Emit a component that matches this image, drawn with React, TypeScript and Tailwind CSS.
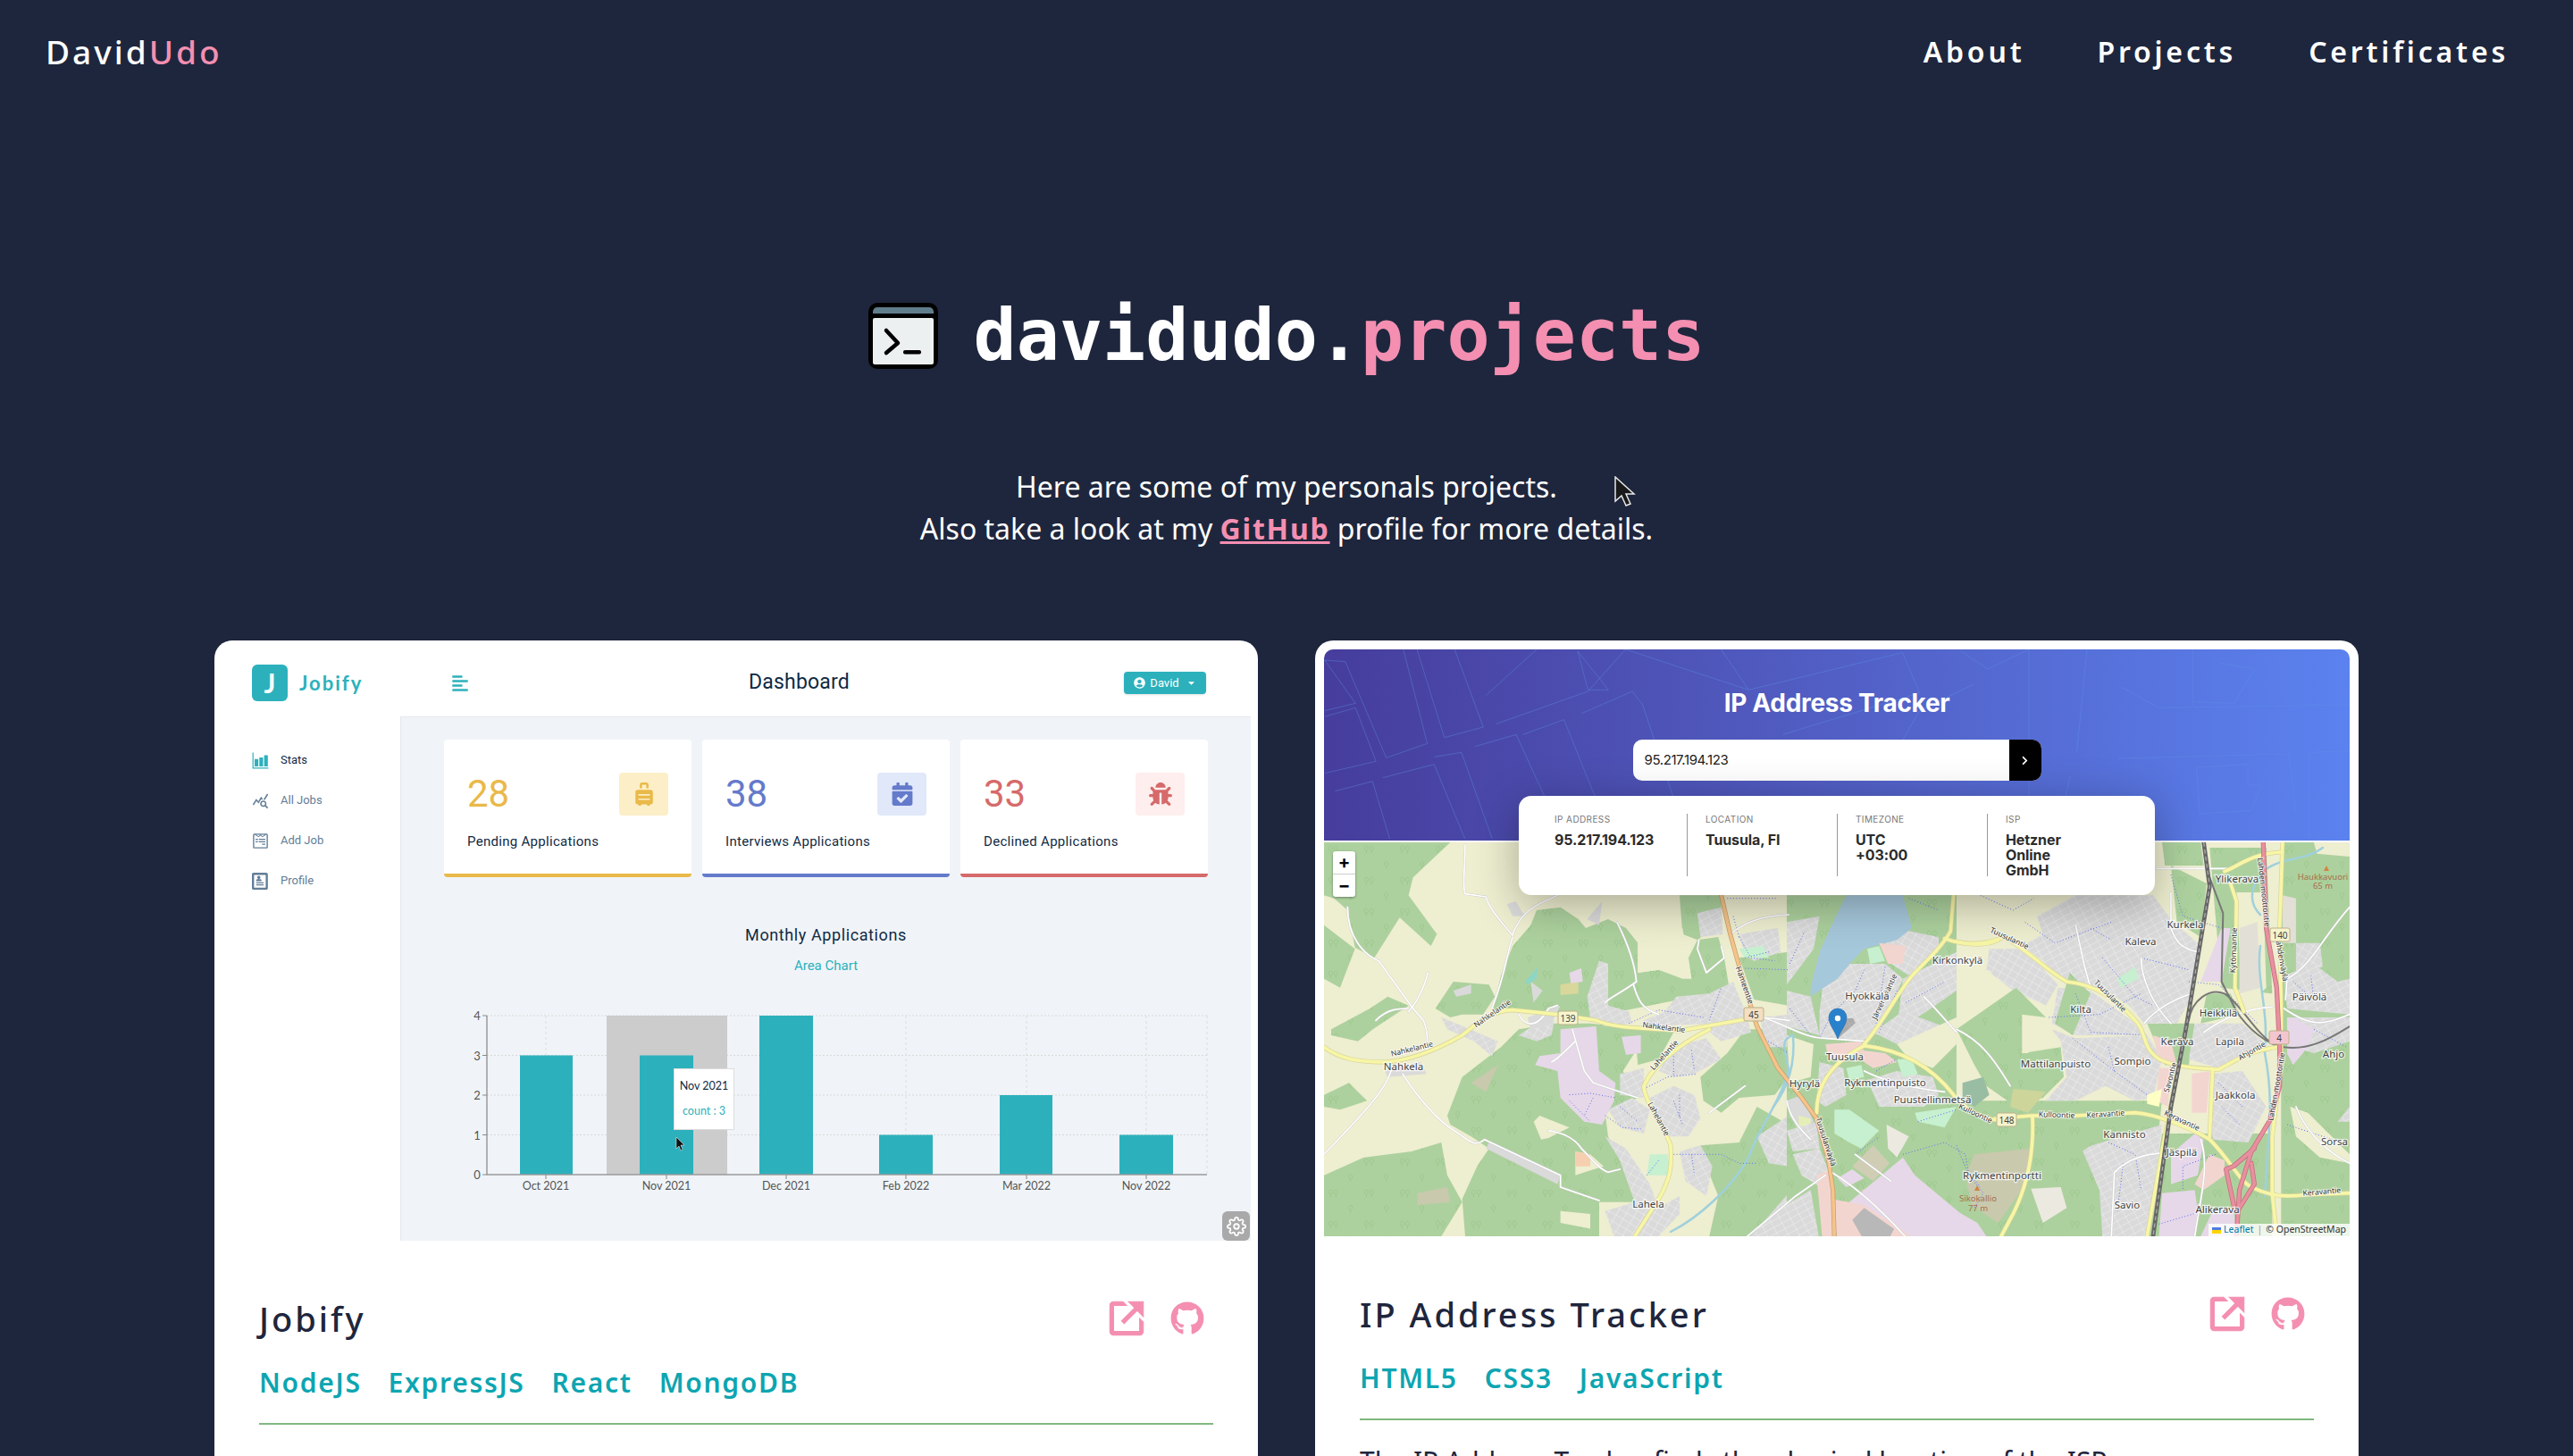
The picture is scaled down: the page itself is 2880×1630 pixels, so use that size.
import { BiLinkExternal } from 'react-icons/bi'
import { FaAlignLeft, FaBug, FaCalendarCheck, FaCaretDown, FaChevronRight, FaGithub, FaSuitcaseRolling, FaUserCircle, FaWpforms } from 'react-icons/fa'
import { ImProfile } from 'react-icons/im'
import { IoBarChartSharp } from 'react-icons/io5'
import { MdQueryStats } from 'react-icons/md'
import { FiSettings } from 'react-icons/fi'

type Area = [string, string]

const FOREST = 'url(#forest)'
const BLOCKS = 'url(#blocks)'
const BLOCKS2 = 'url(#blocks2)'
const PINK = '#e6d8e8'
const SALMON = '#f3d5d0'
const MINT = '#c6f0cf'
const OLIVE = '#c9c9ae'
const CREAM = '#eeeed0'

// polygons are written in the zoomed-in crop units (3 units = 1px)
const areasA: Area[] = [
  [FOREST, '6,12 430,12 305,130 290,190 385,320 365,360 260,265 175,400 110,365 85,240 40,200 6,190'],
  [FOREST, '6,290 110,370 60,500 6,470'],
  [FOREST, '30,640 160,570 220,530 290,560 170,640 120,680 30,660'],
  [FOREST, '380,570 440,480 560,490 580,530 540,590 470,590 430,600'],
  [FOREST, '640,360 700,290 720,240 800,230 860,270 885,300 960,270 1020,300 1060,350 1060,450 1130,440 1210,470 1240,470 1230,400 1260,340 1330,330 1350,400 1370,520 1300,560 1200,540 900,600 640,580 570,590 600,460'],
  [FOREST, '420,930 470,800 600,700 660,640 780,620 900,620 1100,640 1010,780 1060,870 950,920 960,1000 1000,1080 1050,1220 930,1220 930,1335 480,1335 470,1210 520,1100 560,1040 500,1000 430,960'],
  [FOREST, '6,1130 140,1070 300,1050 400,1020 420,1130 470,1220 400,1335 6,1335'],
  [FOREST, '1270,800 1360,720 1420,640 1566,640 1566,800 1520,860 1400,870 1340,920 1280,880'],
  [FOREST, '1200,190 1340,190 1340,280 1260,340 1210,320'],
  [FOREST, '1270,1030 1400,1020 1460,900 1566,960 1566,1335 1300,1335 1330,1200 1290,1100'],
  [FOREST, '1400,400 1566,380 1566,560 1450,540'],
  [FOREST, '1050,640 1180,650 1130,740 1060,760'],
  [FOREST, '6,860 90,820 150,880 60,910 6,900'],
  [CREAM, '710,950 730,930 830,970 760,1005 735,1010'],
  [CREAM, '850,1050 900,1060 945,1100 850,1130'],
  [CREAM, '800,1250 900,1260 900,1310 800,1290'],
  [CREAM, '1060,350 1210,300 1240,470 1130,440 1060,450'],
  [OLIVE, '500,820 590,760 550,850'],
  [OLIVE, '320,1190 420,1170 430,1220 320,1230'],
  ['#d9d79b', '800,490 860,480 860,520 800,525'],
  ['#f6cfb0', '850,1050 900,1060 900,1100 850,1100'],
  [PINK, '800,640 920,630 930,780 985,820 980,880 940,960 880,950 800,870 790,780 715,760 730,730 800,720'],
  [PINK, '1005,665 1070,660 1070,720 1020,725'],
  [PINK, '830,450 870,435 875,480 835,485'],
  [BLOCKS, '890,530 930,410 960,420 960,560 1030,580 1040,620 950,630 900,600'],
  [BLOCKS, '1080,610 1150,580 1190,530 1300,520 1320,620 1090,630'],
  [BLOCKS2, '1300,520 1380,480 1420,580 1440,650 1340,680 1290,640'],
  [BLOCKS2, '1180,700 1290,670 1340,740 1250,790 1180,800 1130,780'],
  [BLOCKS, '1000,790 1080,770 1080,870 1000,860'],
  [BLOCKS, '960,910 1040,870 1100,910 1080,990 1000,970'],
  [BLOCKS2, '1100,870 1180,830 1250,860 1270,940 1230,1000 1160,1000 1110,920'],
  [BLOCKS, '1200,1050 1270,1030 1310,1100 1290,1200 1220,1150'],
  [BLOCKS2, '950,1000 1020,1040 1100,1160 1130,1240 1200,1200 1200,1260 1130,1335 980,1335 950,1250 1050,1220 1000,1080'],
  [BLOCKS, '1440,1335 1566,1190 1566,1335'],
  [BLOCKS2, '1460,1000 1566,930 1566,1100 1500,1090'],
  [BLOCKS, '1400,320 1530,300 1540,380 1450,410 1420,390'],
  [BLOCKS, '1470,600 1566,590 1566,700 1490,700'],
  [BLOCKS, '400,600 450,620 590,680 570,730 510,680 420,640'],
  [BLOCKS2, '660,660 720,620 780,610 770,660 720,680'],
  [BLOCKS, '1260,250 1340,230 1345,320 1270,330'],
  ['#dadada', '210,780 330,750 350,790 220,800'],
  ['#dadada', '620,220 650,210 680,260 640,260'],
  ['#dadada', '440,510 500,490 500,520 450,530'],
  ['#dadada', '700,480 740,510 710,550'],
  ['#dadada', '690,600 800,560 770,620 700,640'],
  ['#dadada', '560,1020 800,1130 790,1160 550,1040'],
  ['#dadada', '890,270 940,210 930,290'],
  [MINT, '1100,1060 1160,1060 1170,1130 1090,1130'],
  [MINT, '1400,370 1480,360 1500,400 1420,400'],
  ['#8fd5c4', '680,480 725,430 720,470 690,490'],
]

const areasB: Area[] = [
  [FOREST, '390,10 960,10 960,1170 390,1170'],
  [CREAM, '390,480 480,510 470,620 400,640'],
  ['#dadada', '390,700 440,680 480,770 430,800 400,750'],
  [BLOCKS, '520,240 720,240 780,290 700,470 640,500 500,490 500,400'],
  [BLOCKS2, '710,130 800,130 900,150 900,200 800,280 740,240'],
  [BLOCKS, '390,100 500,80 480,190 390,310'],
  [BLOCKS, '780,290 960,200 960,330 860,400 760,460'],
  [BLOCKS2, '680,470 780,400 890,440 960,470 760,510'],
  [BLOCKS, '390,330 470,350 500,480 390,450'],
  [CREAM, '760,510 960,420 960,510 880,590 800,560'],
  [FOREST, '790,10 960,10 960,120 890,150 840,100'],
  ['#a6c8db', '590,10 780,10 810,120 760,160 650,190 610,230 560,290 470,350 470,320 500,200 550,90'],
  [SALMON, '700,170 790,180 780,240 730,240'],
  [SALMON, '520,510 640,500 650,540 530,560'],
  [SALMON, '640,530 720,540 760,570 680,590 650,570'],
  [MINT, '660,190 700,180 720,230 670,240'],
  [BLOCKS, '500,570 580,590 590,680 520,720 490,700'],
  [BLOCKS, '660,630 760,600 880,620 900,680 850,720 700,720'],
  [MINT, '590,590 640,580 650,620 600,630'],
  [MINT, '760,560 810,560 830,610 780,620'],
  [MINT, '550,730 600,730 700,800 640,860 600,840 550,810'],
  [MINT, '820,740 960,720 920,790 830,770'],
  ['#e6eeb8', '430,750 470,760 470,790 430,790'],
  [BLOCKS2, '410,880 500,860 540,960 520,1000 440,950'],
  [BLOCKS, '390,800 490,770 500,860 410,870'],
  ['#cfceb4', '610,920 680,850 735,910 680,970'],
  ['#cfceb4', '640,1000 730,970 740,1000 680,1050'],
  [PINK, '600,1040 780,890 820,950 1000,1100 1040,1170 830,1170'],
  [PINK, '560,960 610,930 650,960 590,990'],
  [SALMON, '490,950 540,930 550,1170 510,1170'],
  [SALMON, '540,1030 650,1050 830,1170 560,1170'],
  ['#b8b8b8', '610,1100 650,1060 750,1130 730,1170 650,1170'],
  [BLOCKS, '250,1170 370,1060 470,1000 500,1170'],
  ['#ece9e0', '725,780 800,820 760,890 730,860'],
]

const areasC: Area[] = [
  [FOREST, '0,880 690,880 640,1335 0,1335'],
  [FOREST, '1090,12 1320,12 1320,1335 1090,1335'],
  [FOREST, '850,30 1040,30 1060,520 890,500'],
  [CREAM, '940,180 1030,180 1040,500 960,580'],
  [FOREST, '690,990 1060,990 1060,1335 640,1335'],
  [FOREST, '640,620 800,620 780,760 700,760'],
  [CREAM, '1120,900 1180,920 1320,1060 1320,1090 1220,1070 1140,1000'],
  [CREAM, '1200,12 1320,12 1320,60 1210,50'],
  [BLOCKS, '270,260 400,190 660,190 720,270 820,360 790,530 740,620 630,620 580,560 480,500 360,480 290,410 220,360 290,320'],
  [BLOCKS2, '110,370 230,370 340,490 300,560 190,510 100,440'],
  [BLOCKS2, '320,640 400,670 640,660 690,740 660,870 600,880 500,830 400,880 300,880 370,800 350,680'],
  [BLOCKS2, '340,500 450,510 600,620 640,660 400,660 320,620'],
  [BLOCKS, '800,620 960,620 1040,690 880,770 780,740'],
  [BLOCKS2, '850,790 960,780 1040,900 980,1020 860,1010'],
  [BLOCKS, '420,1040 520,1010 690,960 680,1050 640,1335 490,1335 480,1180'],
  [BLOCKS, '1130,600 1320,600 1320,680 1200,720 1130,700'],
  [BLOCKS2, '1140,350 1220,350 1230,430 1140,450'],
  [BLOCKS, '1100,460 1200,420 1280,480 1320,470 1320,590 1110,570'],
  [BLOCKS, '1320,950 1280,950 1320,900'],
  [CREAM, '0,480 110,440 190,560 60,660 0,640'],
  [FOREST, '0,640 200,500 300,600 240,600 220,720 350,700 360,800 290,870 200,900 100,830 60,760'],
  [FOREST, '0,980 130,960 260,950 400,950 500,1000 420,1050 480,1200 480,1335 150,1335 260,1050 130,1010 0,1030'],
  [FOREST, '720,90 840,150 820,330 740,280'],
  [FOREST, '380,450 450,520 390,660 330,620'],
  [FOREST, '690,12 820,12 830,90 700,90'],
  [FOREST, '840,520 920,520 950,590 820,620'],
  [CREAM, '220,590 300,600 240,720 220,720'],
  [PINK, '820,480 890,300 920,300 890,480'],
  [PINK, '1110,600 1130,600 1200,640 1180,700 1130,760 1110,720'],
  [PINK, '690,1190 800,1180 810,1250 800,1335 680,1335'],
  [PINK, '860,1250 930,1240 940,1335 820,1335'],
  [PINK, '720,1060 800,990 830,1010 810,1130 720,1160'],
  [PINK, '0,1250 70,1290 100,1335 0,1335'],
  [SALMON, '660,660 720,680 740,760 680,750'],
  [SALMON, '680,770 720,770 710,900 670,880'],
  [SALMON, '790,790 850,780 840,920 790,920'],
  [SALMON, '850,1060 900,1080 900,1130 830,1180 800,1160'],
  [OLIVE, '60,1060 250,1040 240,1150 140,1290 50,1230 30,1130'],
  ['#cdd59a', '190,840 300,850 240,920 180,900'],
  ['#99bda3', '20,820 90,800 110,860 60,900 20,870'],
  ['#ece9e0', '250,1175 350,1170 370,1240 290,1290'],
  ['#e2dfd6', '950,300 1010,280 1020,500 950,520'],
  ['#e2dfd6', '1095,190 1140,200 1140,350 1095,350'],
  [MINT, '540,470 600,430 610,470 550,500'],
  ['#feffc4', '640,860 690,840 680,900 640,890'],
]

const yellowRoads = {
  a: [
    'M6,700 C60,740 120,750 210,750 C300,745 400,700 470,660 C530,610 580,575 640,575 L790,590 L920,610 C990,640 1100,635 1200,645 L1430,605',
    'M1300,640 C1200,690 1110,760 1080,830 C1080,880 1160,990 1170,1030 C1175,1100 1170,1140 1130,1210 L1050,1335',
  ],
  b: [
    'M650,510 C720,430 770,320 820,270 C870,220 920,170 940,130 L950,10',
    'M920,155 C990,180 1060,180 1100,160',
    'M650,515 C780,530 880,590 950,680 C990,730 1040,760 1100,765',
    'M650,515 C560,560 490,630 490,740',
  ],
  c: [
    'M0,345 C60,360 110,350 160,330 C220,360 300,440 370,480 C470,490 540,540 600,610 C640,650 620,700 680,740 C740,770 820,770 880,775',
    'M130,940 L250,930 L400,930 L600,920 C680,925 800,980 850,1010 C920,1080 950,1150 990,1170 C1050,1200 1100,1205 1180,1195 L1320,1190',
    'M255,935 C260,1050 240,1160 190,1260 L150,1335',
    'M740,790 L690,1050 L640,1335',
    'M1095,12 L1085,300 L1090,560 L1090,760 L1060,1000 L1060,1190 L1075,1335',
    'M900,110 C950,90 990,50 1090,45',
    'M920,150 L940,210 L935,500 L965,580',
    'M880,775 C930,750 980,710 1080,700',
    'M860,780 L850,1000',
  ],
}

const whiteRoads = {
  a: [
    'M85,230 C85,330 140,390 190,410 C250,490 290,560 340,610 C360,660 350,690 350,720',
    'M355,450 C340,510 310,560 290,580 M180,610 C220,570 260,570 290,570',
    'M235,770 C210,850 140,920 6,1060',
    'M270,790 C320,870 390,950 450,985 C490,1010 510,1040 545,1010 L800,1130 L800,1170 L930,1215',
    'M640,330 C620,380 620,440 570,570 M640,320 C670,240 720,220 790,190',
    'M480,20 C480,100 470,160 480,185 L550,195 C560,240 620,300 640,325',
    'M840,640 L880,780 L910,820 L1060,870',
    'M850,680 C810,720 790,740 770,750',
    'M990,280 C1020,340 1050,420 1055,480 C1000,520 970,530 950,550 M1045,490 C1060,540 1070,570 1130,590',
    'M760,980 C820,990 850,1010 870,1040 C900,1070 930,1110 960,1120 L1000,1110',
    'M1370,320 C1420,280 1470,260 1566,255',
    'M1265,340 L1260,370 L1290,450 L1350,400 L1340,360',
    'M660,590 C680,630 720,640 760,570 L790,560',
    'M1570,610 L1480,600 M1300,920 L1420,830',
  ],
  b: [
    'M310,420 C400,450 450,490 520,490 L650,500',
    'M390,700 C400,760 440,800 470,830 M540,940 C640,1000 740,1100 800,1170',
    'M650,600 C730,640 830,660 920,670',
    'M240,1170 L420,1020 L520,950',
    'M620,880 L740,970',
    'M850,350 C900,400 940,450 960,470',
  ],
  c: [
    'M0,640 C80,680 120,730 180,830',
    'M670,100 L910,100',
    'M630,620 C680,560 760,530 790,520',
    'M400,290 L430,430 L450,500',
    'M620,400 C620,470 660,560 720,620',
    'M820,1010 C850,1100 820,1200 800,1335',
    'M1100,570 C1200,640 1240,620 1320,590',
    'M1320,230 C1230,330 1190,430 1110,470 L1105,540',
    'M830,650 C900,600 980,570 1060,565',
    'M520,1335 L530,1120 C580,1070 640,1060 690,1055',
    'M720,180 L720,300 C740,360 770,370 810,380',
    'M1140,900 C1180,1000 1260,1060 1320,1090',
  ],
}

const bluePaths = {
  a: [
    'M1420,400 L1500,380 M1400,330 L1440,400 L1520,410 M1420,435 L1566,440',
    'M830,860 L900,855 L985,870 M830,880 L900,950 M910,870 L880,930',
    'M950,930 L1010,970 L1070,975 M1000,900 L1060,950',
    'M1080,840 L1160,800 L1260,790 M1180,720 L1180,800 M1240,710 L1250,780',
    'M1030,620 L1130,575 L1280,600 M1300,610 L1340,500',
    'M1180,880 L1210,960 M1200,860 L1200,940',
    'M1170,1060 L1340,1060 L1400,1090 L1460,1090 M1090,1130 L1130,1080 M1240,1060 L1250,1130',
    'M1480,670 L1566,720 M1360,200 L1530,200 M1380,260 L1400,330',
  ],
  b: [
    'M780,880 L920,840 L990,880 L1000,940 L1040,990',
    'M720,250 L690,440 M760,330 L700,470 M540,410 L500,490',
    'M650,260 L620,330 L560,390',
    'M830,770 L960,730',
    'M620,880 L700,820',
    'M800,20 L900,60 M790,370 L920,300 M690,600 L760,560',
    'M400,240 L450,130 M400,390 L470,480',
  ],
  c: [
    'M80,190 L190,240 L260,200 M230,280 L330,350 L520,280',
    'M310,600 L480,590 L620,520 M400,520 L450,650 L640,660',
    'M490,400 L600,530 L660,560 M620,400 L780,440',
    'M390,670 L530,780 L640,860 M530,780 L510,700',
    'M510,1020 L600,1060 L620,1180 M560,1090 L540,1250',
    'M780,480 L880,490 L1010,620',
    'M720,120 L760,260 L890,300',
    'M1130,480 L1200,540 L1190,460 M1200,640 L1310,700 M1110,960 L1320,1030',
    'M0,1030 L40,1130 L90,1190 L60,1240',
    'M660,1300 L830,1250 M870,1060 L760,1100 L760,1180',
    'M450,300 L520,340 M880,820 L960,900 M890,900 L950,960',
  ],
}

const waterPaths = [
  'M2002,1200 C1990,1240 1965,1270 1958,1295 C1940,1330 1900,1365 1870,1380',
  'M2002,1200 C2000,1180 1990,1165 2007,1160 C2010,1195 2000,1220 1985,1240',
  'M2600,950 C2580,965 2555,960 2535,975 C2520,990 2515,1010 2530,1025 M2530,1060 C2525,1100 2540,1130 2535,1180 C2545,1230 2540,1260 2535,1340',
]

const labels: [string, number, number][] = [
  ['Nahkela', 1571, 1199],
  ['Lahela', 1845, 1353],
  ['Tuusula', 2065, 1188],
  ['Hyokkälä', 2090, 1120],
  ['Hyrylä', 2020, 1218],
  ['Rykmentinpuisto', 2110, 1217],
  ['Puustellinmetsä', 2163, 1236],
  ['Kirkonkylä', 2191, 1080],
  ['Rykmentinportti', 2241, 1321],
  ['Mattilanpuisto', 2301, 1196],
  ['Kilta', 2329, 1135],
  ['Sompio', 2387, 1193],
  ['Kannisto', 2378, 1275],
  ['Savio', 2381, 1354],
  ['Keräva', 2437, 1171],
  ['Lapila', 2496, 1171],
  ['Heikkilä', 2483, 1139],
  ['Kaleva', 2396, 1059],
  ['Kurkela', 2446, 1040],
  ['Ylikerava', 2504, 989],
  ['Päivölä', 2585, 1121],
  ['Ahjo', 2612, 1185],
  ['Jaakkola', 2502, 1231],
  ['Jäspilä', 2442, 1295],
  ['Alikerava', 2482, 1359],
  ['Sorsa', 2613, 1283],
]

const roadNames: [string, number, number, number][] = [
  ['Nahkelantie', 1581, 1178, -14],
  ['Nahkelantie', 1672, 1138, -35],
  ['Nahkelantie', 1862, 1154, 7],
  ['Lahelantie', 1865, 1184, -48],
  ['Lahelantie', 1854, 1255, 62],
  ['Hämeentie', 1950, 1105, 70],
  ['Tuusulanväylä', 2041, 1280, 72],
  ['Järvenpääntie', 2112, 1118, -65],
  ['Tuusulantie', 2248, 1054, 25],
  ['Tuusulantie', 2360, 1118, 45],
  ['Kulloontie', 2210, 1250, 25],
  ['Kulloontie', 2302, 1252, 2],
  ['Keravantie', 2357, 1251, -4],
  ['Keravantie', 2441, 1258, 25],
  ['Keravantie', 2599, 1338, -5],
  ['Savontie', 2432, 1208, -75],
  ['Ahjontie', 2522, 1180, -30],
  ['Kytömaantie', 2503, 1065, -88],
  ['Lahden moottoritie', 2531, 1000, 84],
  ['Lahden moottoritie', 2551, 1218, -80],
  ['Lahdenväylä', 2551, 1075, 80],
]

const shields: [string, number, number, string, string][] = [
  ['139', 1755, 1141, '#f7f4cc', '#444'],
  ['45', 1963, 1137, '#f4dfc0', '#444'],
  ['148', 2246, 1255, '#f7f4cc', '#444'],
  ['140', 2552, 1048, '#f7f4cc', '#444'],
  ['4', 2551, 1163, '#f3c6cf', '#444'],
]

function Polys({ areas }: { areas: Area[] }) {
  return (
    <>
      {areas.map(([fill, points], i) => (
        <polygon key={i} points={points} fill={fill} />
      ))}
    </>
  )
}

function Strokes({ paths, color, width, dash }: { paths: string[]; color: string; width: number; dash?: string }) {
  return (
    <>
      {paths.map((d, i) => (
        <path key={i} d={d} fill="none" stroke={color} strokeWidth={width} strokeDasharray={dash} strokeLinecap={dash ? 'butt' : 'round'} strokeLinejoin="round" />
      ))}
    </>
  )
}

function Cropped({ x, y, children }: { x: number; y: number; children: React.ReactNode }) {
  return <g transform={`translate(${x} ${y}) scale(0.3333)`}>{children}</g>
}

function RoadLayer({ road, casing, width }: { road: string[][]; casing: string; width: number }) {
  const origins = [[1480, 940], [1870, 1000], [2190, 940]]
  return (
    <>
      {road.map((paths, i) => (
        <Cropped key={i} x={origins[i][0]} y={origins[i][1]}>
          <Strokes paths={paths} color={casing} width={width} />
        </Cropped>
      ))}
    </>
  )
}

function MapDrawing() {
  const yellow = [yellowRoads.a, yellowRoads.b, yellowRoads.c]
  const white = [whiteRoads.a, whiteRoads.b, whiteRoads.c]
  return (
    <svg viewBox="1482 944 1148 441" className="block h-full w-full" preserveAspectRatio="none" fontFamily="'Noto Sans', sans-serif">
      <defs>
        <pattern id="forest" width="120" height="105" patternUnits="userSpaceOnUse">
          <rect width="120" height="105" fill="#add19e" />
          <path d="M28 40a6 8 0 1 1 .1 0zM28 40v10M46 40a6 8 0 1 1 .1 0zM46 40v10" fill="none" stroke="#94c285" strokeWidth="2" />
          <path d="M95 92a6 8 0 1 1 .1 0zM95 92v10" fill="none" stroke="#94c285" strokeWidth="2" />
        </pattern>
        <pattern id="blocks" width="32" height="21" patternUnits="userSpaceOnUse" patternTransform="rotate(-28)">
          <rect width="32" height="21" fill="#dadada" />
          <path d="M0 0H32M0 0V21" stroke="#f4f4f4" strokeWidth="2.5" />
        </pattern>
        <pattern id="blocks2" width="27" height="24" patternUnits="userSpaceOnUse" patternTransform="rotate(30)">
          <rect width="27" height="24" fill="#dadada" />
          <path d="M0 0H27M0 0V24" stroke="#f4f4f4" strokeWidth="2.5" />
        </pattern>
      </defs>
      <rect x="1482" y="944" width="1148" height="441" fill={CREAM} />
      <Cropped x={1480} y={940}>
        <Polys areas={areasA} />
      </Cropped>
      <Cropped x={2190} y={940}>
        <Polys areas={areasC} />
      </Cropped>
      <Cropped x={1870} y={1000}>
        <Polys areas={areasB} />
      </Cropped>

      <Strokes paths={waterPaths} color="#9fd0dd" width={2.5} />

      <Cropped x={1480} y={940}>
        <Strokes paths={bluePaths.a} color="#5c6cf0" width={3} dash="3 7" />
      </Cropped>
      <Cropped x={1870} y={1000}>
        <Strokes paths={bluePaths.b} color="#5c6cf0" width={3} dash="3 7" />
      </Cropped>
      <Cropped x={2190} y={940}>
        <Strokes paths={bluePaths.c} color="#5c6cf0" width={3} dash="3 7" />
      </Cropped>

      <RoadLayer road={white} casing="#c8c8c8" width={7} />
      <RoadLayer road={white} casing="#ffffff" width={5} />

      <Cropped x={2190} y={940}>
        <Strokes paths={['M850,130 L895,250 L890,480 L940,580 C980,640 1040,690 1100,700 C1180,710 1240,680 1320,630', 'M780,610 C790,540 850,500 900,520 C960,560 1000,650 1070,695']} color="#777" width={6} />
      </Cropped>

      <RoadLayer road={yellow} casing="#d8d49a" width={15} />
      <RoadLayer road={yellow} casing="#f7f6a6" width={11} />

      <Cropped x={1870} y={1000}>
        <Strokes paths={['M170,10 L200,140 L250,320 L290,450 L360,590 L440,690 L490,760 L530,900 L545,1000 L550,1170']} color="#c49a6a" width={15} />
        <Strokes paths={['M170,10 L200,140 L250,320 L290,450 L360,590 L440,690 L490,760 L530,900 L545,1000 L550,1170']} color="#f4c48a" width={11} />
      </Cropped>

      <Cropped x={2190} y={940}>
        <Strokes paths={['M830,12 L850,160 L820,340 L770,640 L720,900 L660,1335']} color="#666" width={14} />
        <Strokes paths={['M830,12 L850,160 L820,340 L770,640 L720,900 L660,1335']} color="#aaa" width={4} dash="14 10" />
        <Strokes paths={['M1030,12 L1040,300 L1075,500 L1085,700 L1085,830 L1050,950 L990,1050 L950,1180 L940,1335', 'M1000,1040 L930,1100 L905,1110 L935,1250', 'M990,1090 L1000,1160 L950,1240']} color="#c6707f" width={16} />
        <Strokes paths={['M1030,12 L1040,300 L1075,500 L1085,700 L1085,830 L1050,950 L990,1050 L950,1180 L940,1335', 'M1000,1040 L930,1100 L905,1110 L935,1250', 'M990,1090 L1000,1160 L950,1240']} color="#e8909f" width={11} />
      </Cropped>

      {roadNames.map(([name, x, y, angle], i) => (
        <text key={i} x={x} y={y} transform={`rotate(${angle} ${x} ${y})`} textAnchor="middle" fontSize="8.5" fill="#333" stroke="#fff" strokeWidth="2" strokeOpacity="0.7" paintOrder="stroke">
          {name}
        </text>
      ))}

      {shields.map(([name, x, y, fill, color]) => (
        <g key={name}>
          <rect x={x - 11} y={y - 8} width="22" height="15" rx="2" fill={fill} stroke="#bbb08a" strokeWidth="1" />
          <text x={x} y={y + 4} textAnchor="middle" fontSize="10" fill={color}>
            {name}
          </text>
        </g>
      ))}

      {labels.map(([name, x, y]) => (
        <text key={name} x={x} y={y} textAnchor="middle" fontSize="11.5" fill="#444" stroke="#fff" strokeWidth="2.5" strokeOpacity="0.75" paintOrder="stroke">
          {name}
        </text>
      ))}
      <path d="M2210 1334l3-6 3 6z" fill="#d2843f" />
      <text x="2214" y="1346" textAnchor="middle" fontSize="9.5" fill="#a86f4a">Sikokallio</text>
      <text x="2214" y="1357" textAnchor="middle" fontSize="9.5" fill="#a86f4a">77 m</text>
      <path d="M2601 976l3-6 3 6z" fill="#d2843f" />
      <text x="2600" y="986" textAnchor="middle" fontSize="9.5" fill="#a86f4a">Haukkavuori</text>
      <text x="2600" y="996" textAnchor="middle" fontSize="9.5" fill="#a86f4a">65 m</text>

      <path d="M2057 1164l20-18 -3-5-7 0z" fill="#000" opacity="0.22" />
      <path d="M2057 1164c-3-9-10-16-10-24a10 10 0 1 1 20 0c0 8-7 15-10 24z" fill="#2a81cb" stroke="#1f68a8" strokeWidth="0.6" />
      <circle cx="2057" cy="1141" r="3.2" fill="#fff" />
    </svg>
  )
}

const chartBars = [
  { x: 582, h: 133.5, w: 59, label: 'Oct 2021', c: 611 },
  { x: 716, h: 133.5, w: 60, label: 'Nov 2021', c: 746 },
  { x: 850, h: 178, w: 60, label: 'Dec 2021', c: 880 },
  { x: 984, h: 44.5, w: 60, label: 'Feb 2022', c: 1014 },
  { x: 1119, h: 89, w: 59, label: 'Mar 2022', c: 1149 },
  { x: 1253, h: 44.5, w: 60, label: 'Nov 2022', c: 1283 },
]

function BarChart() {
  const gridY = [1137, 1181.5, 1226, 1270.5]
  return (
    <svg viewBox="497 1125 855 215" className="h-[215px] w-[855px]" fontFamily="Lato, sans-serif">
      {gridY.map((y) => (
        <path key={y} d={`M545 ${y}H1351`} stroke="#d8d8d8" strokeDasharray="2 2" />
      ))}
      {[611, 746, 880, 1014, 1149, 1283, 1351].map((x) => (
        <path key={x} d={`M${x} 1137V1315`} stroke="#dcdcdc" strokeDasharray="3 3" />
      ))}
      <rect x="679" y="1137" width="135" height="178" fill="#ccc" />
      {chartBars.map((b) => (
        <g key={b.label + b.x}>
          <rect x={b.x} y={1315 - b.h} width={b.w} height={b.h} fill="#2cb1bc" />
          <path d={`M${b.c} 1315v5`} stroke="#888" />
          <text x={b.c} y="1332" textAnchor="middle" fontSize="12.5" fill="#555">
            {b.label}
          </text>
        </g>
      ))}
      <path d="M545 1137V1315H1351" fill="none" stroke="#999" strokeWidth="1.5" />
      {[4, 3, 2, 1, 0].map((n, i) => (
        <g key={n}>
          <path d={`M540 ${1137 + i * 44.5}h5`} stroke="#888" />
          <text x="534" y={1142 + i * 44.5} textAnchor="middle" fontSize="13" fill="#555">
            {n}
          </text>
        </g>
      ))}
      <path d="M757 1273v13l3-3 2 5 2-1-2-5h4z" fill="#111" stroke="#fff" strokeWidth="0.5" />
    </svg>
  )
}

const stats = [
  { n: '28', label: 'Pending Applications', color: 'text-[#e9b949]', border: 'border-[#e9b949]', bg: 'bg-[#fcefc7]', icon: <FaSuitcaseRolling size={26} /> },
  { n: '38', label: 'Interviews Applications', color: 'text-[#647acb]', border: 'border-[#647acb]', bg: 'bg-[#e0e8f9]', icon: <FaCalendarCheck size={26} /> },
  { n: '33', label: 'Declined Applications', color: 'text-[#d66a6a]', border: 'border-[#d66a6a]', bg: 'bg-[#ffeeee]', icon: <FaBug size={26} /> },
]

const navItems = [
  { label: 'Stats', icon: <IoBarChartSharp size={21} />, active: true },
  { label: 'All Jobs', icon: <MdQueryStats size={21} /> },
  { label: 'Add Job', icon: <FaWpforms size={19} /> },
  { label: 'Profile', icon: <ImProfile size={19} /> },
]

function JobifyShot() {
  return (
    <div className="flex h-[662px] w-full flex-col font-['Roboto',sans-serif] text-[#102a43]">
      <div className="flex h-[75px] flex-none items-center pr-[48px]">
        <div className="flex w-[255px] items-center pl-[32px]">
          <div className="flex h-[41px] w-[40px] items-center justify-center rounded-[6px] bg-[#2cb1bc] font-['Lato',sans-serif] text-[30px] font-bold text-white">J</div>
          <div className="ml-[13px] font-['Lato',sans-serif] text-[22px] font-bold tracking-[2px] text-[#2cb1bc]">Jobify</div>
        </div>
        <FaAlignLeft size={20} className="text-[#2cb1bc]" />
        <div className="flex-1 pl-[6px] text-center text-[23px] tracking-[0.2px]">Dashboard</div>
        <div className="flex h-[25px] w-[92px] items-center justify-center gap-[5px] rounded-[4px] bg-[#2cb1bc] text-[13px] text-white shadow-sm">
          <FaUserCircle size={13} />
          <span>David</span>
          <FaCaretDown size={11} className="ml-[3px]" />
        </div>
      </div>
      <div className="flex min-h-0 flex-1">
        <div className="flex w-[199px] flex-none flex-col gap-[25px] border-r border-[#e4e7eb] pl-[32px] pt-[39px] text-[13px]">
          {navItems.map((item) => (
            <div key={item.label} className={item.active ? 'flex h-[20px] items-center gap-[13px] text-[#102a43]' : 'flex h-[20px] items-center gap-[13px] text-[#627d98]'}>
              <span className={item.active ? 'flex w-[19px] justify-center text-[#2cb1bc]' : 'flex w-[19px] justify-center text-[#627d98]'}>{item.icon}</span>
              {item.label}
            </div>
          ))}
        </div>
        <div className="relative flex-1 border-t border-[#e4e7eb] bg-[#f0f4f8] px-[48px] pt-[25px]">
          <div className="grid grid-cols-3 gap-3">
            {stats.map((s) => (
              <div key={s.n} className={`h-[154px] rounded-[4px] border-b-4 bg-white px-[26px] pt-[37px] ${s.border}`}>
                <div className="flex h-[48px] items-center justify-between">
                  <span className={`text-[42px] leading-none ${s.color}`}>{s.n}</span>
                  <span className={`flex h-[48px] w-[55px] items-center justify-center rounded-[4px] ${s.bg} ${s.color}`}>{s.icon}</span>
                </div>
                <div className="mt-[18px] text-[15px] tracking-[0.3px]">{s.label}</div>
              </div>
            ))}
          </div>
          <div className="mt-[51px] text-center text-[18px] tracking-[0.6px]">Monthly Applications</div>
          <div className="mt-[10px] text-center text-[15px] text-[#2cb1bc]">Area Chart</div>
          <div className="relative mt-[32px]">
            <BarChart />
            <div className="absolute left-[257px] top-[71px] flex h-[69px] w-[68px] flex-col items-center justify-center gap-[9px] border border-[#ddd] bg-white font-['Lato',sans-serif] text-[12.5px] text-[#102a43]">
              <span>Nov 2021</span>
              <span className="text-[#2cb1bc]">count : 3</span>
            </div>
          </div>
          <div className="absolute bottom-0 right-[1px] flex h-[33px] w-[31px] items-center justify-center rounded-[6px] bg-[#a9a9a9] text-white">
            <FiSettings size={22} />
          </div>
        </div>
      </div>
    </div>
  )
}

const ipInfo = [
  { label: 'IP ADDRESS', value: ['95.217.194.123'] },
  { label: 'LOCATION', value: ['Tuusula, FI'] },
  { label: 'TIMEZONE', value: ['UTC', '+03:00'] },
  { label: 'ISP', value: ['Hetzner', 'Online', 'GmbH'] },
]

function TrackerShot() {
  return (
    <div className="relative flex h-[657px] w-full flex-col overflow-hidden rounded-t-[10px] font-['Inter',sans-serif]">
      <div className="relative h-[214px] flex-none bg-gradient-to-r from-[#463d9c] to-[#5b82ef]">
        <svg viewBox="29 54 1500 642" preserveAspectRatio="none" className="absolute inset-0 h-full w-full" fill="none" stroke="#5f90e6" strokeOpacity="0.4">
          {[
            '29,90 60,95 120,418 180,370 145,54', '165,54 205,350 262,315 220,54', '265,210 340,54', '400,60 445,190 415,190 400,60',
            '280,305 415,195 470,54', '30,260 75,235 30,90', '30,470 105,430 75,250 30,280', '45,530 100,497 125,690', '115,485 190,440 235,690',
            '190,415 230,400 275,690', '250,380 310,340 380,690', '320,340 380,290 450,690', '405,270 480,195 495,240 560,690', '470,54 650,190 875,65 900,200 700,340',
            '610,54 650,190', '960,60 1000,120 1060,54', '1060,54 1060,380', '1145,54 1130,400', '1195,180 1250,250 1530,240', '1300,54 1300,245',
            '1300,230 1360,235 1390,120 1340,100', '1190,420 1440,405 1450,600', '1305,450 1380,440 1380,510 1400,510 1385,595 1310,605 1305,450', '1470,400 1530,395', '1470,400 1470,690',
            '1060,470 1060,540', '1120,480 1100,690', '980,170 900,260 870,380',
          ].map((p) => (
            <polyline key={p} points={p} vectorEffect="non-scaling-stroke" />
          ))}
        </svg>
        <div className="relative pt-[42px] text-center text-[28px] font-bold leading-[36px] tracking-[-0.3px] text-white">IP Address Tracker</div>
        <div className="relative mx-auto mt-[23px] flex h-[46px] w-[457px] overflow-hidden rounded-[10px] bg-white">
          <div className="flex flex-1 items-center pl-[13px] text-[15px] tracking-[-0.4px] text-[#222]">95.217.194.123</div>
          <div className="flex w-[36px] items-center justify-center bg-black text-white">
            <FaChevronRight size={11} />
          </div>
        </div>
      </div>
      <div className="mt-[2px] min-h-0 flex-1">
        <MapDrawing />
      </div>
      <div className="absolute left-[10px] top-[226px] flex h-[51px] w-[25px] flex-col rounded-[3px] bg-white text-center font-bold text-black shadow-[0_1px_3px_rgba(0,0,0,0.4)]">
        <span className="h-[26px] border-b border-[#ccc] text-[20px] leading-[25px]">+</span>
        <span className="text-[20px] leading-[24px]">−</span>
      </div>
      <div className="absolute left-[218px] top-[164px] flex h-[111px] w-[712px] rounded-[14px] bg-white pl-[40px] pt-[20px] shadow-[0_10px_50px_rgba(0,0,0,0.3)]">
        {ipInfo.map((info, i) => (
          <div key={info.label} className={i === 0 ? 'h-[70px] w-[149px] border-r border-[#999]' : i === 3 ? 'h-[70px] w-[168px] pl-[20px]' : 'h-[70px] w-[168px] border-r border-[#999] pl-[20px]'}>
            <div className="text-[10px] leading-[12px] tracking-[0.4px] text-[#777]">{info.label}</div>
            <div className="mt-[9px] text-[16px] font-bold leading-[17px] tracking-[-0.1px] text-[#2b2b2b]">
              {info.value.map((line) => (
                <div key={line}>{line}</div>
              ))}
            </div>
          </div>
        ))}
      </div>
      <div className="absolute bottom-0 right-0 flex h-[14px] items-center gap-[3px] bg-white/80 pl-[4px] pr-[4px] font-['Noto_Sans',sans-serif] text-[10.5px] text-[#333]">
        <span className="inline-block h-[7px] w-[10px] bg-gradient-to-b from-[#4c7be0] from-50% to-[#ffd500] to-50%" />
        <span className="text-[#0078a8]">Leaflet</span>
        <span className="mx-[1px] text-[#999]">|</span>
        <span>© OpenStreetMap</span>
      </div>
    </div>
  )
}

function ProjectCard({ title, tags, shot, children }: { title: string; tags: string[]; shot: React.ReactNode; children?: React.ReactNode }) {
  return (
    <div className="h-[1200px] overflow-hidden rounded-[20px] bg-white p-[10px]">
      {shot}
      <div className="px-[40px] pt-[62px]">
        <div className="flex h-[50px] items-center justify-between">
          <h3 className="text-[38px] font-medium leading-[50px] tracking-[3px] text-[#1e263d]">{title}</h3>
          <div className="mr-[10px] flex items-center gap-[30px] text-[#f48fb1]">
            <BiLinkExternal size={50} className="mr-[-6px]" stroke="currentColor" strokeWidth={0.5} />
            <FaGithub size={38} />
          </div>
        </div>
        <div className="mt-[26px] flex h-[40px] items-center gap-[30px] text-[30px] font-semibold tracking-[1.7px] text-[#0da5b1]">
          {tags.map((t) => (
            <span key={t}>{t}</span>
          ))}
        </div>
        <div className="mt-[26px] h-[2px] bg-[#81b77f]" />
        {children && <div className="pt-[24px] text-[30px] leading-[44px] text-[#1e263d]">{children}</div>}
      </div>
    </div>
  )
}

function TerminalIcon() {
  return (
    <svg viewBox="0 0 78 74" className="h-[74px] w-[78px] flex-none">
      <rect width="78" height="74" rx="10" fill="#000" />
      <path d="M5 10a5 5 0 0 1 5-5h58a5 5 0 0 1 5 5v2H5z" fill="#607d8b" />
      <rect x="5" y="17" width="68" height="52" rx="2" fill="#ecf0f1" />
      <path d="M20 31l13 14-13 11" fill="none" stroke="#000" strokeWidth="4.5" strokeLinecap="round" strokeLinejoin="round" />
      <rect x="39" y="53" width="20" height="4.5" rx="2" fill="#000" />
    </svg>
  )
}

export default function App() {
  return (
    <div className="relative h-[1630px] w-full overflow-hidden bg-[#1e263d] font-['Noto_Sans',sans-serif] text-white">
      <header className="flex h-[116px] items-center justify-between pl-[51px] pr-[72px]">
        <div className="text-[37px] font-medium tracking-[3px]">
          David<span className="text-[#f48fb1]">Udo</span>
        </div>
        <nav className="flex items-center gap-[81px] text-[32px] font-semibold tracking-[3.8px]">
          <a>About</a>
          <a>Projects</a>
          <a>Certificates</a>
        </nav>
      </header>

      <div className="mt-[215px] flex h-[90px] items-center justify-center gap-[40px]">
        <TerminalIcon />
        <h1 className="font-['DejaVu_Sans_Mono',monospace] text-[80px] font-bold leading-[90px]">
          davidudo.<span className="text-[#f48fb1]">projects</span>
        </h1>
      </div>

      <p className="mt-[100px] text-center text-[32px] leading-[47px]">
        Here are some of my personals projects.
        <br />
        Also take a look at my{' '}
        <a className="font-bold tracking-[1.8px] text-[#f48fb1] underline">GitHub</a> profile for more details.
      </p>

      <svg viewBox="0 0 24 36" className="absolute left-[1807px] top-[533px] h-[36px] w-[24px]">
        <path d="M1 1v27l7-6 5 11 5-2-5-11h9z" fill="#1a1a1a" stroke="#e8e8e8" strokeWidth="1.5" />
      </svg>

      <div className="mx-auto mt-[102px] grid w-[2400px] grid-cols-2 gap-[64px] text-[#1e263d]">
        <ProjectCard title="Jobify" tags={['NodeJS', 'ExpressJS', 'React', 'MongoDB']} shot={<JobifyShot />} />
        <ProjectCard title="IP Address Tracker" tags={['HTML5', 'CSS3', 'JavaScript']} shot={<TrackerShot />}>
          The IP Address Tracker finds the physical location of the ISP
        </ProjectCard>
      </div>
    </div>
  )
}
